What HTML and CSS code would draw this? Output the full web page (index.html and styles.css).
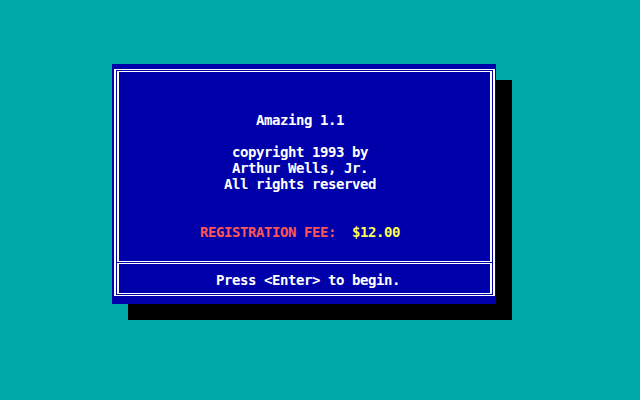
FILE: index.html
```html
<!DOCTYPE html>
<html>
<head>
<meta charset="utf-8">
<title>Amazing 1.1</title>
<link rel="stylesheet" href="styles.css">
</head>
<body>
<div class="screen">
  <div class="dialog">
    <div class="frame">
      <div class="panel panel-main">
        <p class="line col-32">Amazing 1.1</p>
        <p class="line col-29 gap-1">copyright 1993 by</p>
        <p class="line col-29">Arthur Wells, Jr.</p>
        <p class="line col-28">All rights reserved</p>
        <p class="line col-25 gap-2"><span class="fee-label">REGISTRATION FEE:</span>  <span class="fee-value">$12.00</span></p>
      </div>
      <div class="panel panel-foot">
        <p class="line col-27">Press &lt;Enter&gt; to begin.</p>
      </div>
    </div>
  </div>
</div>
</body>
</html>
```
FILE: styles.css
```css
html, body {
  margin: 0;
  padding: 0;
}
body {
  width: 640px;
  height: 400px;
  overflow: hidden;
  background: #00AAAA;
  font-family: "DejaVu Sans Mono", "Liberation Mono", monospace;
  font-weight: bold;
  font-size: 14px;
  letter-spacing: -0.43px;
  color: #FFFFFF;
}
.screen {
  padding: 64px 0 0 112px;
}
.dialog {
  box-sizing: border-box;
  width: 384px;
  height: 240px;
  padding: 5px 1px 8px 2px;
  background: #0000AA;
  box-shadow: 16px 16px 0 #000000;
}
.frame {
  box-sizing: border-box;
  height: 227px;
  padding: 1px;
  border: 1px solid #FFFFFF;
  border-left-width: 2px;
  border-right-width: 2px;
  display: flex;
  flex-direction: column;
  gap: 1px;
}
.panel {
  box-sizing: border-box;
  border: 1px solid #FFFFFF;
  border-left-width: 2px;
  border-right-width: 2px;
  padding-left: 1px;
}
.panel-main {
  height: 191px;
  padding-top: 40px;
}
.panel-foot {
  height: 31px;
  padding-top: 8px;
}
.line {
  margin: 0;
  height: 16px;
  line-height: 16px;
  white-space: pre;
}
.gap-1 { margin-top: 16px; }
.gap-2 { margin-top: 32px; }
.col-25 { padding-left: 80px; }
.col-27 { padding-left: 96px; }
.col-28 { padding-left: 104px; }
.col-29 { padding-left: 112px; }
.col-32 { padding-left: 136px; }
.fee-label { color: #FF5555; }
.fee-value { color: #FFFF55; }
```
